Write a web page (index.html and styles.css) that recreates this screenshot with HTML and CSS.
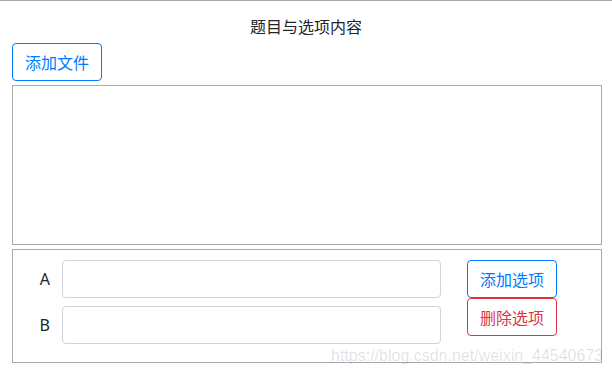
FILE: index.html
```html
<!DOCTYPE html>
<html lang="zh">
<head>
<meta charset="utf-8">
<title>题目与选项内容</title>
<link rel="stylesheet" href="styles.css">
</head>
<body>
<div class="page">
  <div class="title">题目与选项内容</div>
  <button class="btn btn-blue">添加文件</button>
  <div class="content-box"></div>
  <div class="options-box">
    <div class="option-rows">
      <div class="option-row">
        <span class="option-label">A</span>
        <input class="option-input" type="text">
      </div>
      <div class="option-row">
        <span class="option-label">B</span>
        <input class="option-input" type="text">
      </div>
    </div>
    <div class="option-actions">
      <button class="btn btn-blue">添加选项</button>
      <button class="btn btn-red">删除选项</button>
    </div>
  </div>
</div>
<div class="watermark"><span>https://blog.csdn.net/weixin_44540673</span></div>
</body>
</html>
```

FILE: styles.css
```css
html, body {
  margin: 0;
  padding: 0;
  background: #fff;
}

body {
  font-family: "Noto Sans", "Noto Sans CJK SC", sans-serif;
  font-size: 16px;
  line-height: 1.5;
  color: #212529;
}

.page {
  border-top: 1px solid #aaaaaa;
  padding: 0 10px 0 12px;
}

.title {
  text-align: center;
  padding-top: 14px;
  margin-left: -12px;
  margin-right: -10px;
  height: 24px;
  line-height: 24px;
  margin-bottom: 4px;
}

.btn {
  display: block;
  box-sizing: border-box;
  width: 90px;
  height: 38px;
  padding: 0 12px;
  background: #fff;
  border: 1px solid #007bff;
  border-radius: 4px;
  font-family: "Noto Sans CJK SC", sans-serif;
  font-size: 16px;
  line-height: 36px;
  color: #007bff;
  text-align: center;
}

.btn-red {
  border-color: #dc3545;
  color: #dc3545;
}

.content-box {
  box-sizing: border-box;
  width: 590px;
  height: 160px;
  margin-top: 4px;
  border: 1px solid #aaaaaa;
}

.options-box {
  box-sizing: border-box;
  width: 590px;
  margin-top: 4px;
  padding: 10px 0 18px 0;
  border: 1px solid #aaaaaa;
  display: flex;
  align-items: flex-start;
}

.option-rows {
  display: flex;
  flex-direction: column;
  gap: 8px;
}

.option-row {
  display: flex;
  align-items: center;
}

.option-label {
  width: 37px;
  padding-right: 12px;
  text-align: right;
  line-height: 24px;
}

.option-input {
  box-sizing: border-box;
  width: 379px;
  height: 38px;
  margin: 0;
  border: 1px solid #ced4da;
  border-radius: 4px;
  background: #fff;
}

.option-actions {
  margin-left: 26px;
  display: flex;
  flex-direction: column;
}

.watermark {
  position: absolute;
  left: 331px;
  top: 348px;
  width: 271px;
  overflow: hidden;
  white-space: nowrap;
  font-family: "Liberation Sans", Arial, sans-serif;
  font-size: 16px;
  line-height: 16px;
  color: rgba(0, 0, 0, 0.13);
}
```
